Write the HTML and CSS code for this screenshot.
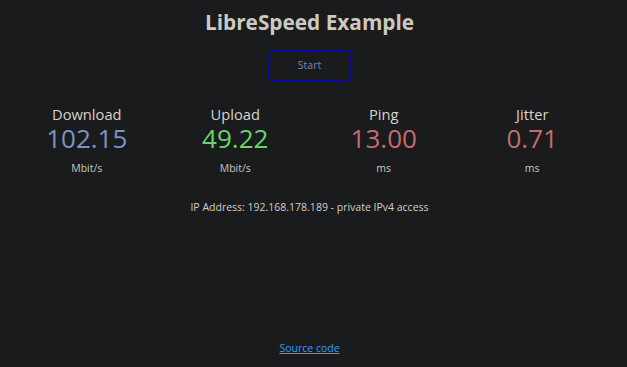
FILE: index.html
```html
<!DOCTYPE html>
<html lang="en">
<head>
<meta charset="utf-8">
<title>LibreSpeed Example</title>
<link rel="stylesheet" href="styles.css">
</head>
<body>
<div class="page">
  <h1 class="title">LibreSpeed Example</h1>
  <div class="start-btn">Start</div>
  <div class="test">
    <div class="test-area">
      <div class="test-name">Download</div>
      <div class="meter-text dl">102.15</div>
      <div class="unit">Mbit/s</div>
    </div>
    <div class="test-area">
      <div class="test-name">Upload</div>
      <div class="meter-text ul">49.22</div>
      <div class="unit">Mbit/s</div>
    </div>
    <div class="test-area">
      <div class="test-name">Ping</div>
      <div class="meter-text ping">13.00</div>
      <div class="unit">ms</div>
    </div>
    <div class="test-area">
      <div class="test-name">Jitter</div>
      <div class="meter-text jit">0.71</div>
      <div class="unit">ms</div>
    </div>
  </div>
  <div class="ip">IP Address: 192.168.178.189 - private IPv4 access</div>
  <a class="source" href="#">Source code</a>
</div>
</body>
</html>
```
FILE: styles.css
```css
html, body {
  margin: 0;
  padding: 0;
  border: none;
  background: #1a1b1d;
}
body {
  font-family: "Open Sans", "Noto Sans", sans-serif;
  font-size: 10.5px;
  color: #d3cfc9;
  height: 367px;
  overflow: hidden;
}
.page {
  width: 619px;
  display: flex;
  flex-direction: column;
  align-items: center;
  text-align: center;
}
.title {
  margin: 8px 0 0;
  font-size: 20.8px;
  line-height: 28px;
  font-weight: 700;
  color: #cdc8c0;
}
.start-btn {
  margin-top: 14px;
  box-sizing: border-box;
  width: 83.2px;
  height: 31.2px;
  border: 1.6px solid #0d0d9e;
  border-radius: 3px;
  line-height: 28px;
  color: #7286b2;
  font-size: 10.6px;
}
.test {
  margin-top: 25px;
  display: flex;
  gap: 2.9px;
  justify-content: center;
}
.test-area {
  width: 145.6px;
  display: flex;
  flex-direction: column;
  align-items: center;
}
.test-name {
  font-size: 14.7px;
  line-height: 17px;
  color: #d6d2cc;
}
.meter-text {
  margin-top: 3.8px;
  font-size: 26px;
  line-height: 22px;
}
.dl { color: #7c93c3; }
.ul { color: #6cd36c; }
.ping, .jit { color: #c46c6f; }
.unit {
  margin-top: 12.3px;
  line-height: 14px;
  color: #cbc7c1;
}
.ip {
  margin-top: 24.8px;
  line-height: 14px;
  color: #d3cfc9;
}
.source {
  margin-top: 127.4px;
  line-height: 14px;
  color: #3a9af5;
  text-decoration: underline;
}
```
